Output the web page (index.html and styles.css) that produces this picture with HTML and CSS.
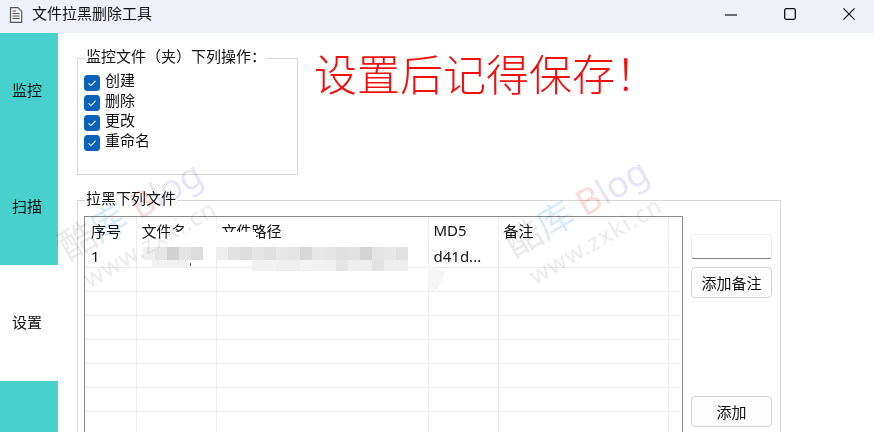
FILE: index.html
```html
<!DOCTYPE html>
<html lang="zh-CN">
<head>
    <meta charset="UTF-8">
    <title>文件拉黑删除工具</title>
    <link rel="stylesheet" href="styles.css">
</head>
<body>
    <div class="titlebar">
        <svg class="app-icon" width="14" height="16" viewBox="0 0 14 16"><path d="M1.5 .7H9L12.7 4.4V15.3H1.5Z" fill="#f2f2f2" stroke="#555" stroke-width="1.2"/><path d="M3.5 6.5H10.5M3.5 9H10.5M3.5 11.5H10.5M3.5 4H7" stroke="#555" stroke-width="1.2"/></svg>
        <span class="app-title">文件拉黑删除工具</span>
        <div class="win-controls">
            <svg width="12" height="12" viewBox="0 0 12 12"><path d="M0 7H12" stroke="#111" stroke-width="1.2"/></svg>
            <svg width="12" height="12" viewBox="0 0 12 12"><rect x=".7" y=".7" width="10.6" height="10.6" rx="1.5" fill="none" stroke="#111" stroke-width="1.3"/></svg>
            <svg width="12" height="12" viewBox="0 0 12 12"><path d="M.4 .4L11.6 11.6M11.6 .4L.4 11.6" stroke="#111" stroke-width="1.2"/></svg>
        </div>
    </div>

    <div class="app">
        <div class="sidebar">
            <div class="tab">监控</div>
            <div class="tab">扫描</div>
            <div class="tab active">设置</div>
            <div class="tab"></div>
        </div>

        <div class="main">
            <div class="top-row">
                <fieldset class="group watch-group">
                    <legend>监控文件（夹）下列操作：</legend>
                    <div class="check"><svg class="tick" width="16" height="16" viewBox="0 0 16 16"><rect width="16" height="16" rx="3.5" fill="#0b62b8"/><path d="M4.5 8.3L7 10.6L11.5 5.8" fill="none" stroke="#fff" stroke-width="1.1"/></svg>创建</div>
                    <div class="check"><svg class="tick" width="16" height="16" viewBox="0 0 16 16"><rect width="16" height="16" rx="3.5" fill="#0b62b8"/><path d="M4.5 8.3L7 10.6L11.5 5.8" fill="none" stroke="#fff" stroke-width="1.1"/></svg>删除</div>
                    <div class="check"><svg class="tick" width="16" height="16" viewBox="0 0 16 16"><rect width="16" height="16" rx="3.5" fill="#0b62b8"/><path d="M4.5 8.3L7 10.6L11.5 5.8" fill="none" stroke="#fff" stroke-width="1.1"/></svg>更改</div>
                    <div class="check"><svg class="tick" width="16" height="16" viewBox="0 0 16 16"><rect width="16" height="16" rx="3.5" fill="#0b62b8"/><path d="M4.5 8.3L7 10.6L11.5 5.8" fill="none" stroke="#fff" stroke-width="1.1"/></svg>重命名</div>
                </fieldset>
                <div class="notice">设置后记得保存<span class="bang">！</span></div>
            </div>

            <fieldset class="group black-group">
                <legend>拉黑下列文件</legend>
                <div class="black-body">
                    <div class="table-frame">
                        <table class="files">
                            <colgroup>
                                <col class="c1"><col class="c2"><col class="c3"><col class="c4"><col class="c5"><col class="c6">
                            </colgroup>
                            <thead>
                                <tr><th>序号</th><th>文件名</th><th>文件路径</th><th>MD5</th><th>备注</th><th></th></tr>
                            </thead>
                            <tbody>
                                <tr class="first"><td>1</td><td></td><td></td><td>d41d...</td><td></td><td></td></tr>
                                <tr><td></td><td></td><td></td><td></td><td></td><td></td></tr>
                                <tr><td></td><td></td><td></td><td></td><td></td><td></td></tr>
                                <tr><td></td><td></td><td></td><td></td><td></td><td></td></tr>
                                <tr><td></td><td></td><td></td><td></td><td></td><td></td></tr>
                                <tr><td></td><td></td><td></td><td></td><td></td><td></td></tr>
                                <tr><td></td><td></td><td></td><td></td><td></td><td></td></tr>
                                <tr><td></td><td></td><td></td><td></td><td></td><td></td></tr>
                            </tbody>
                        </table>
                    </div>
                    <div class="side-actions">
                        <input class="note-input" type="text">
                        <button class="btn">添加备注</button>
                        <button class="btn add-btn">添加</button>
                    </div>
                </div>
            </fieldset>
        </div>
    </div>

    <!-- blurred out file name and path -->
    <svg class="mosaic" width="320" height="66" viewBox="0 0 320 66">
        <rect x="30" y="0" width="20" height="15" fill="#fff"/>
        <rect x="76" y="0" width="40" height="15" fill="#fff"/>
        <rect x="3" y="15" width="12" height="13" fill="#f0f0f0"/>
        <rect x="15" y="15" width="12" height="13" fill="#e6e6e6"/>
        <rect x="27" y="15" width="12" height="13" fill="#d2d2d2"/>
        <rect x="39" y="15" width="12" height="13" fill="#e4e4e4"/>
        <rect x="51" y="15" width="12" height="13" fill="#dcdcdc"/>
        <rect x="76" y="15" width="12" height="13" fill="#eeeeee"/>
        <rect x="88" y="15" width="12" height="13" fill="#e2e2e2"/>
        <rect x="100" y="15" width="12" height="13" fill="#dedede"/>
        <rect x="112" y="15" width="12" height="13" fill="#e6e6e6"/>
        <rect x="124" y="15" width="12" height="13" fill="#e0e0e0"/>
        <rect x="136" y="15" width="12" height="13" fill="#e8e8e8"/>
        <rect x="148" y="15" width="12" height="13" fill="#e4e4e4"/>
        <rect x="160" y="15" width="12" height="13" fill="#d8d8d8"/>
        <rect x="172" y="15" width="12" height="13" fill="#e8e8e8"/>
        <rect x="184" y="15" width="12" height="13" fill="#e6e6e6"/>
        <rect x="196" y="15" width="12" height="13" fill="#e0e0e0"/>
        <rect x="208" y="15" width="12" height="13" fill="#e2e2e2"/>
        <rect x="220" y="15" width="12" height="13" fill="#d4d4d4"/>
        <rect x="232" y="15" width="12" height="13" fill="#e4e4e4"/>
        <rect x="244" y="15" width="12" height="13" fill="#e8e8e8"/>
        <rect x="256" y="15" width="12" height="13" fill="#e2e2e2"/>
        <rect x="12" y="28" width="36" height="8" fill="#f1f1f1"/>
        <rect x="112" y="28" width="24" height="11" fill="#f2f2f2"/>
        <rect x="136" y="28" width="24" height="11" fill="#f0f0f0"/>
        <rect x="160" y="28" width="12" height="11" fill="#f4f4f4"/>
        <rect x="172" y="28" width="24" height="11" fill="#f2f2f2"/>
        <rect x="196" y="28" width="12" height="11" fill="#e6e6e6"/>
        <rect x="208" y="28" width="24" height="11" fill="#eeeeee"/>
        <rect x="232" y="28" width="12" height="11" fill="#e2e2e2"/>
        <rect x="244" y="28" width="24" height="11" fill="#eeeeee"/>
        <path d="M288 33L305 40L296 62L288 55Z" fill="#f6f6f6"/>
        <rect x="50" y="31" width="1" height="3" fill="#555"/>
    </svg>

    <!-- site watermark, twice -->
    <div class="watermark wm-left">
        <div class="wm-brand"><span class="wm-grey">酷</span><span class="wm-blue">库</span> <span class="wm-pink">B</span><span class="wm-lilac">log</span></div>
        <div class="wm-url">www.zxki.cn</div>
    </div>
    <div class="watermark wm-right">
        <div class="wm-brand"><span class="wm-grey">酷</span><span class="wm-blue">库</span> <span class="wm-pink">B</span><span class="wm-lilac">log</span></div>
        <div class="wm-url">www.zxki.cn</div>
    </div>
</body>
</html>
```

FILE: styles.css
```css
html, body {
    margin: 0;
    height: 432px;
    overflow: hidden;
}
body {
    position: relative;
    background: white;
    color: #111;
    font-family: "Noto Sans", "Noto Sans CJK SC", sans-serif;
    font-size: 15px;
}
.titlebar {
    display: flex;
    align-items: center;
    height: 33px;
    background: #eef2f8;
}
.app-icon {
    margin-left: 9px;
    margin-bottom: 4px;
}
.app-title {
    margin-left: 9px;
    margin-bottom: 8px;
}
.win-controls {
    display: flex;
    gap: 47px;
    margin-left: auto;
    margin-right: 19px;
    margin-bottom: 6px;
}
.app {
    display: flex;
    height: 399px;
    overflow: hidden;
}
.sidebar {
    width: 58px;
    flex: none;
    background: #48d1cc;
}
.tab {
    display: flex;
    align-items: center;
    height: 116px;
    padding: 0 0 4px 12px;
    box-sizing: border-box;
}
.tab.active {
    background: white;
}
.main {
    flex: 1;
    padding: 13px 0 0 19px;
    overflow: hidden;
}
.top-row {
    display: flex;
}
.group {
    margin: 0;
    padding: 0;
    border: 1px solid #d6d6d6;
    box-sizing: border-box;
}
.group legend {
    margin-left: 1px;
    padding: 0 1px 4px 1px;
    line-height: 20px;
}
.watch-group {
    width: 221px;
    height: 129px;
    padding: 5px 0 0 6px;
}
.check {
    display: flex;
    align-items: flex-start;
    gap: 5px;
    height: 20px;
    line-height: 10px;
}
.tick {
    flex: none;
}
.notice {
    margin: 5px 0 0 16px;
    color: #f01010;
    font-size: 43px;
    font-weight: 300;
    line-height: 42px;
}
.bang {
    font-family: "Noto Sans CJK JP", sans-serif;
}
.black-group {
    width: 704px;
    height: 256px;
    margin-top: 13px;
    padding: 4px 0 0 6px;
}
.black-body {
    display: flex;
    gap: 8px;
}
.table-frame {
    width: 597px;
    height: 260px;
    border: 1px solid #8a8a8a;
    overflow: hidden;
}
.files {
    width: 596px;
    border-collapse: collapse;
    table-layout: fixed;
}
.c1 { width: 51px; }
.c2 { width: 80px; }
.c3 { width: 212px; }
.c4 { width: 70px; }
.c5 { width: 170px; }
.files th {
    height: 26px;
    padding: 0 0 0 5px;
    font-weight: normal;
    text-align: left;
    box-sizing: border-box;
    border-right: 1px solid #efefef;
}
.files td {
    height: 24px;
    padding: 0 0 0 5px;
    box-sizing: border-box;
    border-right: 1px solid #ececec;
    border-bottom: 1px solid #ececec;
}
.files .first td {
    padding-top: 3px;
}
.files th:first-child,
.files td:first-child {
    padding-left: 6px;
}
.files th:last-child,
.files td:last-child {
    border-right: none;
}
.side-actions {
    display: flex;
    flex-direction: column;
    align-items: flex-start;
    width: 81px;
    padding-top: 18px;
}
.note-input {
    width: 81px;
    height: 25px;
    box-sizing: border-box;
    border: 1px solid #ececec;
    border-bottom-color: #7f7f7f;
    border-radius: 3px;
    background: white;
}
.btn {
    width: 81px;
    height: 31px;
    margin-top: 8px;
    padding: 0;
    background: #fdfdfd;
    color: #111;
    border: 1px solid #d4d4d4;
    border-radius: 4px;
    font: inherit;
}
.add-btn {
    margin-top: 98px;
}
.mosaic {
    position: absolute;
    left: 140px;
    top: 232px;
    pointer-events: none;
}
.watermark {
    position: absolute;
    width: 190px;
    text-align: center;
    transform: rotate(-30deg);
    mix-blend-mode: multiply;
    pointer-events: none;
}
.wm-left {
    left: 44px;
    top: 190px;
}
.wm-right {
    left: 490px;
    top: 187px;
}
.wm-brand {
    font-size: 36px;
    line-height: 36px;
    white-space: nowrap;
}
.wm-url {
    margin-top: 6px;
    color: #ececec;
    font-size: 24px;
    line-height: 28px;
    letter-spacing: 1px;
    white-space: nowrap;
}
.wm-grey { color: #eaeaea; }
.wm-blue { color: #d8edf9; }
.wm-pink { color: #f9dddd; }
.wm-lilac { color: #e6e6f4; }
```
